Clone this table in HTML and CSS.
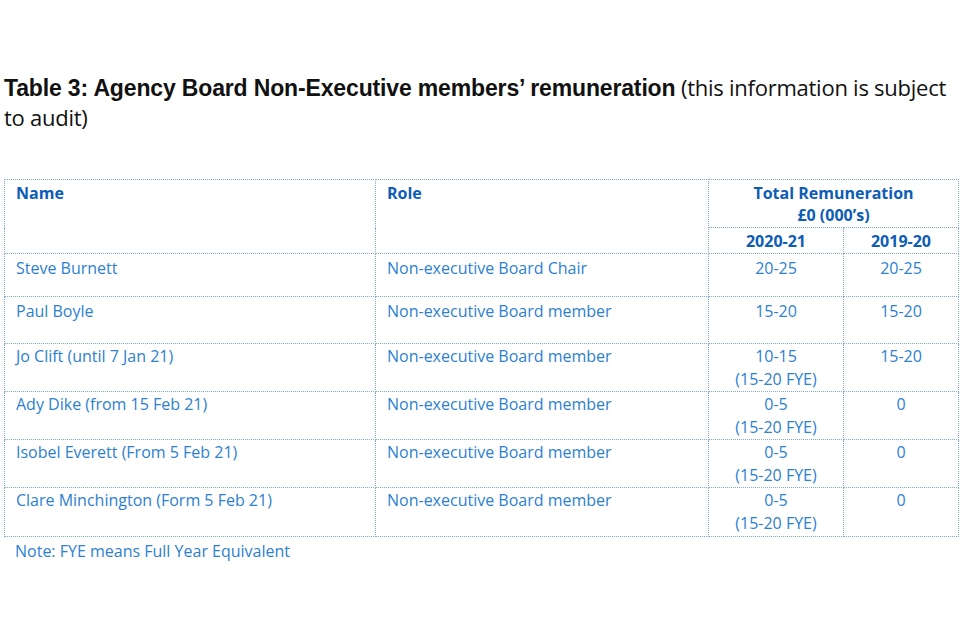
FILE: index.html
```html
<!DOCTYPE html>
<html>
<head>
<meta charset="utf-8">
<link rel="stylesheet" href="styles.css">
</head>
<body>
<div class="page">
  <h1 class="title"><span class="title-bold">Table 3: Agency Board Non-Executive members’ remuneration</span> <span class="title-normal">(this information is subject to audit)</span></h1>
  <table class="rem">
    <colgroup>
      <col class="c-name"><col class="c-role"><col class="c-y1"><col class="c-y2">
    </colgroup>
    <thead>
      <tr>
        <th rowspan="2" class="left">Name</th>
        <th rowspan="2" class="left">Role</th>
        <th colspan="2" class="center total">Total Remuneration<br>£0 (000’s)</th>
      </tr>
      <tr>
        <th class="center year">2020-21</th>
        <th class="center year">2019-20</th>
      </tr>
    </thead>
    <tbody>
      <tr class="r1">
        <td>Steve Burnett</td><td>Non-executive Board Chair</td><td class="center">20-25</td><td class="center">20-25</td>
      </tr>
      <tr class="r2">
        <td>Paul Boyle</td><td>Non-executive Board member</td><td class="center">15-20</td><td class="center">15-20</td>
      </tr>
      <tr class="r3">
        <td>Jo Clift (until 7 Jan 21)</td><td>Non-executive Board member</td><td class="center">10-15<br>(15-20 FYE)</td><td class="center">15-20</td>
      </tr>
      <tr class="r3">
        <td>Ady Dike (from 15 Feb 21)</td><td>Non-executive Board member</td><td class="center">0-5<br>(15-20 FYE)</td><td class="center">0</td>
      </tr>
      <tr class="r3">
        <td>Isobel Everett (From 5 Feb 21)</td><td>Non-executive Board member</td><td class="center">0-5<br>(15-20 FYE)</td><td class="center">0</td>
      </tr>
      <tr class="r3 last">
        <td>Clare Minchington (Form 5 Feb 21)</td><td>Non-executive Board member</td><td class="center">0-5<br>(15-20 FYE)</td><td class="center">0</td>
      </tr>
    </tbody>
  </table>
  <p class="note">Note: FYE means Full Year Equivalent</p>
</div>
</body>
</html>
```

FILE: styles.css
```css
html, body {
  margin: 0;
  padding: 0;
  background: #ffffff;
}
.page {
  width: 960px;
  height: 640px;
  padding: 73px 0 0 4px;
  box-sizing: border-box;
}
.title {
  margin: 0;
  width: 950px;
  font-size: 22px;
  line-height: 28px;
  font-weight: normal;
  color: #111;
}
.title-bold {
  font-family: "Liberation Sans", Arial, sans-serif;
  font-weight: bold;
  font-size: 23px;
  letter-spacing: -0.15px;
}
.title-normal {
  font-family: "Open Sans", sans-serif;
  font-size: 22px;
  letter-spacing: -0.25px;
}
.rem {
  margin-top: 46px;
  border-collapse: collapse;
  table-layout: fixed;
  width: 954px;
  font-family: "Open Sans", sans-serif;
  font-size: 16px;
  line-height: 23px;
  color: #2d7fd2;
}
.c-name { width: 371px; }
.c-role { width: 333px; }
.c-y1 { width: 135px; }
.c-y2 { width: 115px; }
.rem th, .rem td {
  border: 1px dotted #7ea9e2;
  padding: 2px 11px 0 11px;
  vertical-align: top;
}
.rem th {
  font-weight: bold;
  color: #0d5db6;
}
.left { text-align: left; }
.center { text-align: center; }
.total { height: 45px; line-height: 22px; padding-top: 1px; }
.year { height: 22px; padding-top: 1px; }
.r1 td { height: 39px; padding-top: 3px; }
.r2 td { height: 43px; padding-top: 3px; }
.r3 td { height: 46px; padding-top: 1px; }
.r3.last td { height: 47px; }
.note {
  margin: 3px 0 0 11px;
  font-family: "Open Sans", sans-serif;
  font-size: 16px;
  line-height: 22px;
  color: #2d7fd2;
}
```
